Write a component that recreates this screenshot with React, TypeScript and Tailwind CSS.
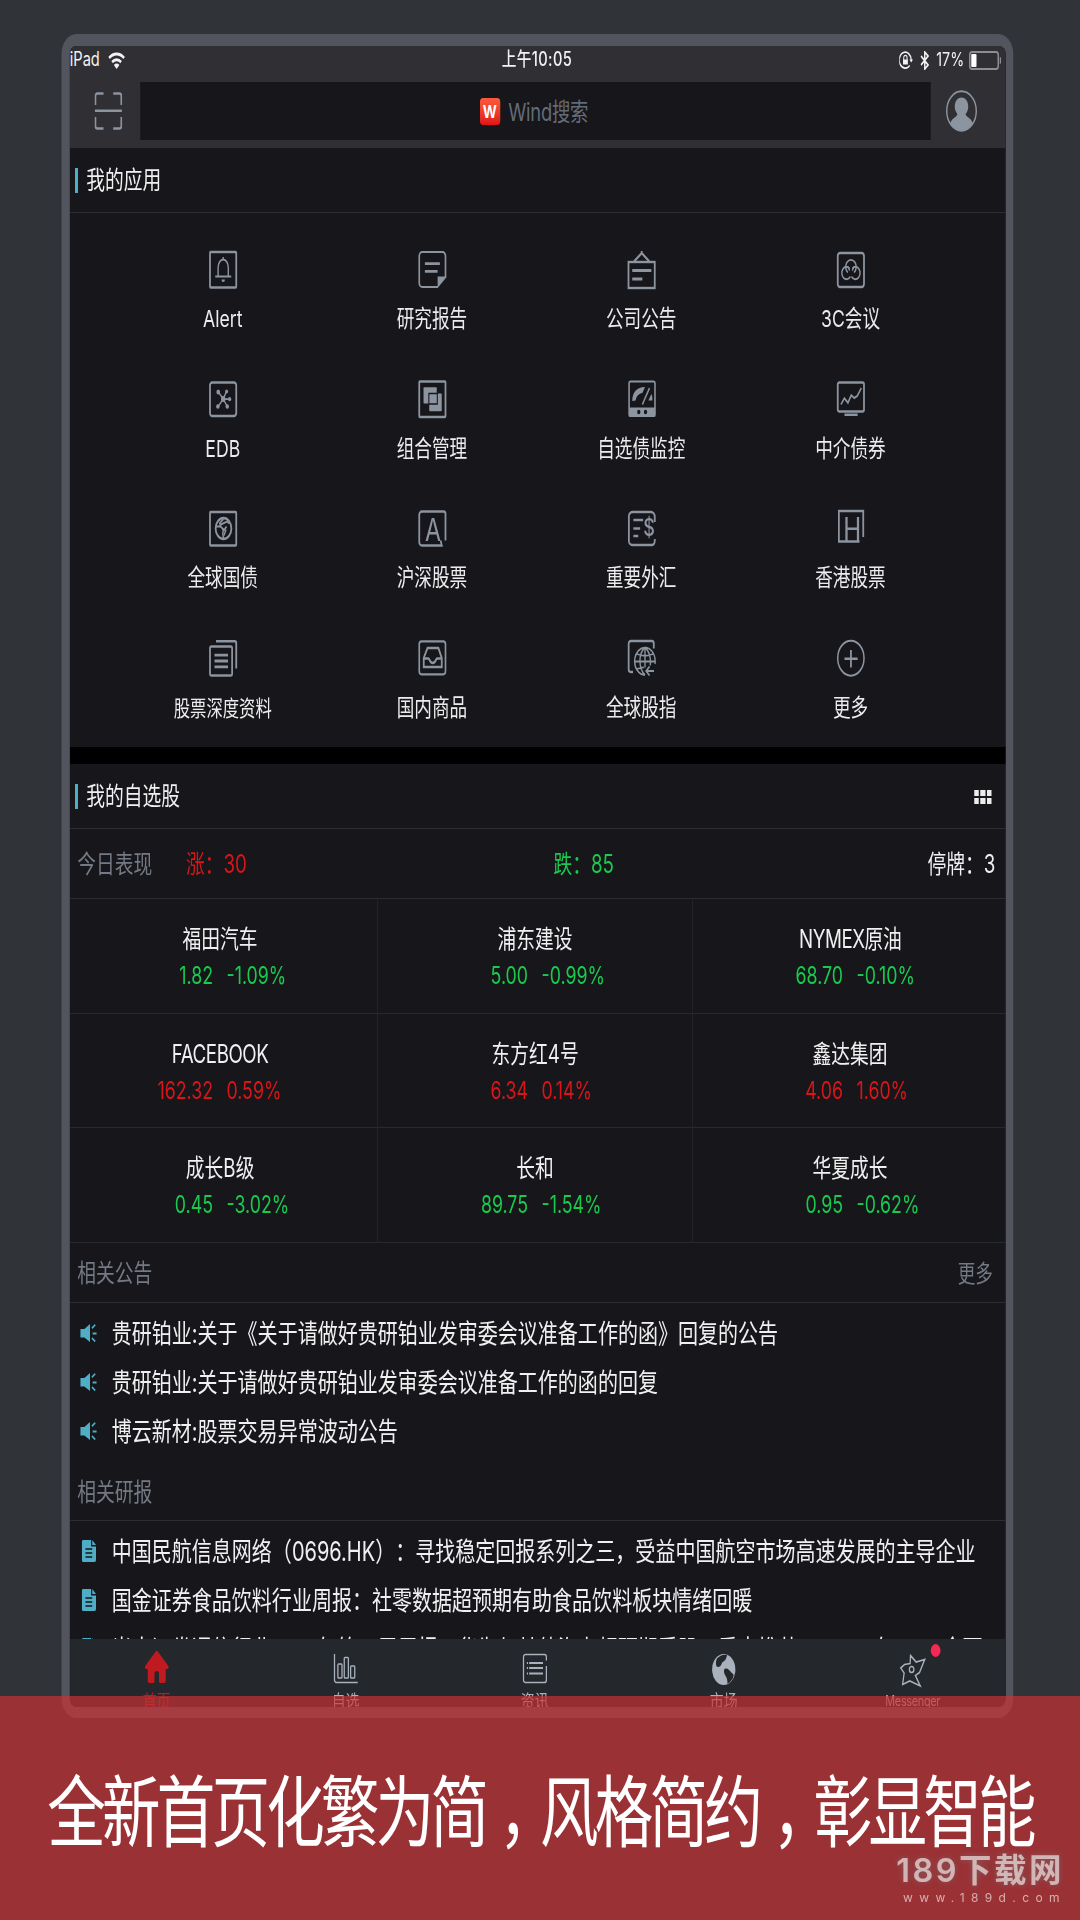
import { clsx } from "clsx";
import type { ReactNode } from "react";

function Icon({ children }: { children: ReactNode }) {
  return (
    <svg
      viewBox="0 0 37 37"
      className="size-[37px] shrink-0 overflow-visible text-[#8c94a0]"
      fill="none"
      stroke="currentColor"
      strokeWidth="2.4"
    >
      {children}
    </svg>
  );
}

const apps: { label: string; small?: boolean; icon: ReactNode }[] = [
  {
    label: "Alert",
    icon: (
      <>
        <rect x="1" y="1" width="35" height="35.5" rx="1" />
        <path d="M8 25.5h21.3M11.8 25.5V17c0-5 3-8.5 6.8-8.5s6.8 3.5 6.8 8.5v8.5M18.6 6v3" strokeWidth="1.9" />
        <path d="M16.3 28.5h4.6a2.3 2.6 0 0 1-4.6 0z" fill="currentColor" stroke="none" />
      </>
    ),
  },
  {
    label: "研究报告",
    icon: (
      <>
        <path d="M36 26V5a4 4 0 0 0-4-4H5a4 4 0 0 0-4 4v27a4 4 0 0 0 4 4h21" strokeWidth="2.2" />
        <path d="M25.5 37V25.5H37v1z" fill="currentColor" stroke="none" />
        <path d="M8.5 12.7h20M8.5 20.3h17" strokeWidth="2.8" />
      </>
    ),
  },
  {
    label: "公司公告",
    icon: (
      <>
        <rect x="1" y="11" width="35" height="26" />
        <path d="M8.4 10.5 18.6 2l10.2 8.5M18.6 0v3" />
        <path d="M6 19.5h25.5M6 28h13.5" strokeWidth="2.8" />
      </>
    ),
  },
  {
    label: "3C会议",
    icon: (
      <>
        <rect x="1" y="2" width="35" height="34" rx="3" />
        <path d="M14.5 21.5a7 7 0 1 1 8.2 0" strokeWidth="1.9" />
        <path d="M16.8 17.4a6.2 6.2 0 1 0 1 8M20.4 17.4a6.2 6.2 0 1 1-1 8" strokeWidth="1.9" />
        <path d="m14.5 16 2.5 3.5M22.7 16l-2.5 3.5" strokeWidth="1.7" />
      </>
    ),
  },
  {
    label: "EDB",
    icon: (
      <>
        <rect x="1" y="1.5" width="35" height="33.5" rx="3" />
        <path d="m12 10.8 6.6 7 4.4-7.3M27 18.1h-8.4l-7.1 7.7M18.6 17.8l5.4 7.7" strokeWidth="1.7" />
        <g fill="currentColor" stroke="none">
          <circle cx="12" cy="11" r="2.5" />
          <circle cx="23.2" cy="10.5" r="2" />
          <circle cx="27.2" cy="18.2" r="2.1" />
          <circle cx="11.5" cy="25.5" r="2.3" />
          <circle cx="24" cy="25.5" r="2.3" />
          <circle cx="18.6" cy="18" r="3" />
        </g>
      </>
    ),
  },
  {
    label: "组合管理",
    icon: (
      <>
        <rect x="1" y="0.5" width="35" height="35.5" rx="1" />
        <g fill="currentColor" stroke="none">
          <rect x="6.7" y="6.2" width="17.6" height="16.3" rx="1" />
          <rect x="14.3" y="12.5" width="16.7" height="17.7" rx="1" />
        </g>
        <path d="M13.8 23.5V12.5h11.3V23H13.8" stroke="#17161a" strokeWidth="1.4" />
      </>
    ),
  },
  {
    label: "自选债监控",
    icon: (
      <>
        <rect x="1.8" y="0.5" width="34.5" height="34.5" rx="1.5" strokeWidth="2.1" />
        <path d="M2 26.5h34.5v9H2z" fill="currentColor" stroke="none" />
        <path d="M6 20C6 11.5 12 6 23 6l-3.5 6c-4.5.5-8 3-9 7.5z" fill="currentColor" stroke="none" />
        <path d="M19.5 23.5 29 7" strokeWidth="1.9" />
        <path d="M31.5 13 27.5 19.5h5.3c.2-3-.2-5-1.300-6.500z" fill="currentColor" stroke="none" />
        <circle cx="14.7" cy="31" r="2.2" fill="#17161a" stroke="none" />
        <circle cx="23.7" cy="31" r="2.2" fill="#17161a" stroke="none" />
      </>
    ),
  },
  {
    label: "中介债券",
    icon: (
      <>
        <rect x="1" y="1.5" width="35" height="29" rx="2" />
        <path d="M10 33.7h17.5" strokeWidth="2.6" />
        <path d="m5.3 23.5 4.5-6.3 4.8 4.6 4.4-7.6 4 2.8 4-2 5.4-8" strokeWidth="2" />
      </>
    ),
  },
  {
    label: "全球国债",
    icon: (
      <>
        <rect x="1" y="2" width="35" height="33.5" rx="1" />
        <circle cx="19" cy="18.5" r="10.5" />
        <path d="M9 16.500h6l4 3-1 4 1 5.500M15 16l-1-3 5-4M15.500 14.500l8-3 3 2M20 20l3-3.500" strokeWidth="2" />
        <path d="m17 19 5 1.500-2.500 5" strokeWidth="1.8" />
      </>
    ),
  },
  {
    label: "沪深股票",
    icon: (
      <>
        <path d="M36 30.500V4a2.500 2.500 0 0 0-2.500-2.500h-29A3.500 3.500 0 0 0 1 5v27a3.500 3.500 0 0 0 3.500 3.500H31l-1.500-5" />
        <text x="19.5" y="31" textAnchor="middle" fontSize="31" fill="currentColor" stroke="none">
          A
        </text>
      </>
    ),
  },
  {
    label: "重要外汇",
    icon: (
      <>
        <path d="M36 12V7a5 5 0 0 0-5-5H6a4.500 4.500 0 0 0-4.500 4.500v24A4.500 4.500 0 0 0 6 35h26a4 4 0 0 0 4-4v-2" />
        <path d="M7.500 10h13M7.500 18.500h9M7.500 26H14" strokeWidth="2.7" />
        <text x="28.5" y="26.5" textAnchor="middle" fontSize="24" fontWeight="500" fill="currentColor" stroke="none">
          $
        </text>
      </>
    ),
  },
  {
    label: "香港股票",
    icon: (
      <>
        <path d="M35 27V1H2.500v30.500H30" />
        <text
          x="8.5"
          y="31.5"
          fontSize="32"
          textLength="24"
          lengthAdjust="spacingAndGlyphs"
          fill="currentColor"
          stroke="none"
        >
          H
        </text>
      </>
    ),
  },
  {
    label: "股票深度资料",
    small: true,
    icon: (
      <>
        <rect x="1" y="6.5" width="29.5" height="29" rx="1.5" />
        <path d="M9 1.300h25a2 2 0 0 1 2 2V28.500" strokeWidth="2.5" />
        <path d="M7 15.200h18M7 21h18M7 26.800h18" strokeWidth="2.8" />
      </>
    ),
  },
  {
    label: "国内商品",
    icon: (
      <>
        <rect x="1" y="1.3" width="35" height="33" rx="3" strokeWidth="2.2" />
        <path d="M12 8h14.500L31 18v9H7v-9zM7 18.500h6.500c1 0 1.500 4.500 5.500 4.500s4.500-4.500 5.500-4.500H31" />
      </>
    ),
  },
  {
    label: "全球股指",
    icon: (
      <>
        <path d="M34.700 8.500V3.500A2.500 2.500 0 0 0 32.200 1H4A2.800 2.800 0 0 0 1.200 3.800v25.500A2.800 2.800 0 0 0 4 32h3" />
        <path d="M36.300 24A13.700 13.700 0 1 0 23 35M23 7.500v20M9.500 21.500H36M12.500 14c6 2.300 15 2.300 21 0M12.500 29c3-1 6-1.700 9-1.700M23 7.500c-9 6-9 21 0 27.500M23 7.500c6 4 8 10 7 18" strokeWidth="1.8" />
        <path d="M35 31H24.500M29 26.500 24.500 31l4.500 4.500" strokeWidth="1.9" />
      </>
    ),
  },
  {
    label: "更多",
    icon: (
      <>
        <circle cx="18.5" cy="18.2" r="17.5" strokeWidth="2" />
        <path d="M10 18.700h17.500M18.600 10v17.500" />
      </>
    ),
  },
];

const stocks = [
  { name: "福田汽车", price: "1.82", change: "-1.09%" },
  { name: "浦东建设", price: "5.00", change: "-0.99%" },
  { name: "NYMEX原油", price: "68.70", change: "-0.10%" },
  { name: "FACEBOOK", price: "162.32", change: "0.59%" },
  { name: "东方红4号", price: "6.34", change: "0.14%" },
  { name: "鑫达集团", price: "4.06", change: "1.60%" },
  { name: "成长B级", price: "0.45", change: "-3.02%" },
  { name: "长和", price: "89.75", change: "-1.54%" },
  { name: "华夏成长", price: "0.95", change: "-0.62%" },
];

const notices = [
  "贵研铂业:关于《关于请做好贵研铂业发审委会议准备工作的函》回复的公告",
  "贵研铂业:关于请做好贵研铂业发审委会议准备工作的函的回复",
  "博云新材:股票交易异常波动公告",
];

const reports = [
  "中国民航信息网络（0696.HK）：寻找稳定回报系列之三，受益中国航空市场高速发展的主导企业",
  "国金证券食品饮料行业周报：社零数据超预期有助食品饮料板块情绪回暖",
  "光大证券通信行业2018年第12周周报：华为与其他海力超预期看股，重点推荐Q1-2018年，5G全面",
];

const tabs: { label: string; icon: ReactNode; active?: boolean; dot?: boolean }[] = [
  {
    label: "首页",
    active: true,
    icon: (
      <path
        d="M14.300.8a2.300 2.300 0 0 1 3.400 0L31 14.500c1.500 1.600.8 3.500-1 3.500h-2v12a2 2 0 0 1-2 2h-5.500a1.500 1.500 0 0 1-1.500-1.500V23a3 3 0 0 0-6 0v7.500a1.500 1.500 0 0 1-1.500 1.500H6a2 2 0 0 1-2-2V18H2C.2 18-.5 16.100 1 14.500z"
        fill="currentColor"
      />
    ),
  },
  {
    label: "自选",
    icon: (
      <g fill="none" stroke="currentColor" strokeWidth="1.7">
        <path d="M1 3v26a2.500 2.500 0 0 0 2.500 2.500H32" />
        <rect x="5.5" y="13" width="5.5" height="14" rx="1" />
        <rect x="14" y="6.5" width="5.5" height="20.5" rx="1" />
        <rect x="22.5" y="15" width="5.5" height="12" rx="1" />
      </g>
    ),
  },
  {
    label: "资讯",
    icon: (
      <g fill="none" stroke="currentColor" strokeWidth="1.7">
        <path d="M31.500 9.500V6A2.500 2.500 0 0 0 29 3.500H3.500A2.500 2.500 0 0 0 1 6v23a2.500 2.500 0 0 0 2.500 2.500H29a2.500 2.500 0 0 0 2.500-2.500V15" />
        <path d="M8.500 12H27M8.500 17H27M8.500 22.500H27M5.500 12h1.500M5.500 17h1.500M5.500 22.500h1.500" strokeWidth="2" />
      </g>
    ),
  },
  {
    label: "市场",
    icon: (
      <>
        <circle cx="16" cy="18.5" r="15.5" fill="currentColor" />
        <path
          d="M7 7.500c4-3.500 9-4.500 13.500-3.500-1 2-1 3.500-2.500 5s-4 1.500-5 4-4 3.500-6.500 2.500C5 13.500 5.500 9.500 7 7.500zM17 18c4-1.500 6 1 8.500 3s4 2 3.500 4c-1 3.500-4 6-8 8 0-3-.5-6-2.500-8s-3-5-1.500-7z"
          fill="#24272b"
        />
      </>
    ),
  },
  {
    label: "Messenger",
    dot: true,
    icon: (
      <g fill="none" stroke="currentColor" strokeWidth="1.7">
        <path d="m13 4.500 7.500 6.500L32 8.500 25 21.500 19.500 24.500 26 35l-14-5-9.500 3.500L4.500 22 0 17l5-3.500 7.500-1z" />
        <circle cx="14.5" cy="18.5" r="3" />
      </g>
    ),
  },
];

function StatusBar() {
  return (
    <div className="flex h-[28px] items-center pr-[6px] text-[19.5px] text-[#f2f2f3]">
      <div className="flex flex-1 items-center gap-[11px]">
        <span>iPad</span>
        <svg viewBox="0 0 23 17" className="h-[17px] w-[23px]" fill="none" stroke="currentColor" strokeWidth="3">
          <path d="M1.500 6a14.500 14.500 0 0 1 20 0M5.500 10.200a8.700 8.700 0 0 1 12 0" />
          <path d="m7.800 13 3.700 4 3.700-4a5.500 5.500 0 0 0-7.400 0z" fill="currentColor" stroke="none" />
        </svg>
      </div>
      <span className="pl-[4px] font-medium tracking-[0.5px]">上午10:05</span>
      <div className="flex flex-1 items-center justify-end">
        <svg viewBox="0 0 18 18" className="h-[18px] w-[18px]" fill="none" stroke="currentColor" strokeWidth="1.7">
          <path d="M14 14.500A8 8 0 1 1 16 9" />
          <path d="m13.500 8.500 2.500 3 2.500-3z" fill="currentColor" stroke="none" />
          <path d="M6 9V6.500a2.200 2.200 0 0 1 4.400 0V9" strokeWidth="1.3" />
          <rect x="5" y="8.5" width="6.5" height="5" fill="currentColor" stroke="none" />
        </svg>
        <svg viewBox="0 0 12 19" className="ml-[10px] h-[19px] w-[12px]" fill="none" stroke="currentColor" strokeWidth="1.9">
          <path d="m1 5 9.500 9-4.500 4V1l4.500 4L1 14" />
        </svg>
        <span className="ml-[9px] text-[19px]">17%</span>
        <div className="ml-[6px] flex h-[19px] w-[40px] rounded-[4px] border-2 border-[#8e8d91] p-px">
          <div className="w-[7px] rounded-[1px] bg-white" />
        </div>
        <div className="ml-px h-[7px] w-[2.5px] rounded-r-full bg-[#8e8d91]" />
      </div>
    </div>
  );
}

function SearchBar() {
  return (
    <div className="flex items-center pt-[8px] pb-[8px]">
      <div className="flex w-[94px] justify-center pl-[9px] text-[#8c94a0]">
        <svg viewBox="0 0 37 38" className="h-[38px] w-[37px]" fill="none" stroke="currentColor" strokeWidth="2.4">
          <path d="M1.200 13V4a2.500 2.500 0 0 1 2.500-2.500H12M25 1.500h8.300A2.500 2.500 0 0 1 35.800 4v9M1.200 25v9a2.500 2.500 0 0 0 2.500 2.500H12M25 36.500h8.300a2.500 2.500 0 0 0 2.500-2.500v-9M.5 18.700h36" />
        </svg>
      </div>
      <div className="flex h-[58px] w-[1054px] items-center justify-center bg-[#17161a] pr-[4px]">
        <div className="flex size-[27px] items-center justify-center rounded-[4px] bg-linear-to-b from-[#fd5a3c] to-[#e01017] text-[18px] font-bold text-white">
          W
        </div>
        <span className="ml-[11px] pt-[2px] text-[24.5px] tracking-[-0.3px] text-[#636c77]">Wind搜索</span>
      </div>
      <svg viewBox="0 0 42 42" className="ml-[20px] size-[42px] text-[#8c94a0]">
        <circle cx="21" cy="21" r="19.7" fill="none" stroke="currentColor" strokeWidth="1.9" />
        <path
          d="M21 7.500c5.500 0 9 4 9 9 0 3-1.500 6-3.500 7.500 0 1.500 2 2.500 4.500 4 3 1.800 4.500 3.500 5 5.500A20 20 0 0 1 21 41 20 20 0 0 1 6 33.500c.5-2 2-3.700 5-5.500 2.500-1.500 4.500-2.500 4.500-4-2-1.500-3.500-4.500-3.500-7.500 0-5 3.500-9 9-9z"
          fill="currentColor"
        />
      </svg>
    </div>
  );
}

function SectionTitle({ title, children }: { title: string; children?: ReactNode }) {
  return (
    <div className="flex h-[65px] items-center border-b border-[#2b2d31] pr-[19px] pl-[7px] text-[25px] text-[#f0f0f1]">
      <span className="mr-[11px] h-[25px] w-[4px] bg-[#4db0c8]" />
      <span className="pt-[2px]">{title}</span>
      {children}
    </div>
  );
}

function AppGrid() {
  return (
    <div className="grid h-[534px] auto-rows-[129.5px] grid-cols-[repeat(4,279px)] pt-[38px] pl-[64.5px]">
      {apps.map((app) => (
        <div key={app.label} className="flex flex-col items-center">
          <Icon>{app.icon}</Icon>
          <span
            className={clsx(
              "mt-[13px] leading-[36px] text-[#ececed]",
              app.small ? "text-[21.8px]" : "text-[23.5px]"
            )}
          >
            {app.label}
          </span>
        </div>
      ))}
    </div>
  );
}

function Performance() {
  return (
    <div className="grid h-[70px] grid-cols-[145px_490px_1fr_auto] items-center border-b border-[#2b2d31] pt-[3px] pr-[14px] pl-[10px] text-[25px]">
      <span className="text-[#737a85]">今日表现</span>
      <span className="text-[#d81619]">涨：30</span>
      <span className="text-[#18cb4f]">跌：85</span>
      <span className="text-[#f0f0f1]">停牌：3</span>
    </div>
  );
}

function StockGrid() {
  return (
    <div className="-ml-[9px] grid w-[1260px] auto-rows-[114.7px] grid-cols-3">
      {stocks.map((stock) => (
        <div
          key={stock.name}
          className="flex flex-col items-center border-r border-b border-[#26292d] pt-[22px]"
        >
          <span
            className={clsx(
              "text-[25px] leading-[36px] text-[#f0f0f1]",
              /[A-Z]{2}/.test(stock.name) && "tracking-[-0.6px]"
            )}
          >
            {stock.name}
          </span>
          <div
            className={clsx(
              "grid w-full grid-cols-2 gap-[18px] pt-[1px] pr-[1px] text-[23.7px] leading-[36px]",
              stock.change.startsWith("-") ? "text-[#18cb4f]" : "text-[#d81619]"
            )}
          >
            <span className="text-right">{stock.price}</span>
            <span>{stock.change}</span>
          </div>
        </div>
      ))}
    </div>
  );
}

function SpeakerIcon() {
  return (
    <svg viewBox="0 0 22 18" className="h-[18px] w-[22px] text-[#4fadc6]" fill="currentColor">
      <path d="M0 5h5.500L13 0v18l-7.500-4.500H0z" />
      <path d="m15.500 4.300 4.500-3.500M16.500 9.500H22M15.500 14l4.500 3.500" stroke="currentColor" strokeWidth="1.9" />
    </svg>
  );
}

function DocIcon() {
  return (
    <svg viewBox="0 0 19 22" className="ml-[2px] h-[22px] w-[19px] text-[#4fadc6]" fill="currentColor">
      <path d="M2 0h10.500v6.500H19V20a2 2 0 0 1-2 2H2a2 2 0 0 1-2-2V2a2 2 0 0 1 2-2z" />
      <path d="M14 0v5h5z" />
      <path d="M5 9h9M5 13h9M5 17h9" stroke="#17161a" strokeWidth="1.4" />
    </svg>
  );
}

function NewsList({ items, icon }: { items: string[]; icon: ReactNode }) {
  return (
    <div className="pt-[5px] pb-[1px]">
      {items.map((item) => (
        <div key={item} className="flex h-[49px] items-center pl-[14px] whitespace-nowrap">
          <div className="w-[42px]">{icon}</div>
          <span className="pt-[1px] text-[26.7px] text-[#f0f0f1] [text-spacing-trim:space-all]">{item}</span>
        </div>
      ))}
    </div>
  );
}

function TabBar() {
  return (
    <div className="bg-[#24272b]">
      <div className="-ml-[10px] grid w-[1260px] grid-cols-5">
        {tabs.map((tab) => (
          <div
            key={tab.label}
            className={clsx(
              "relative flex flex-col items-center pt-[12px]",
              tab.active ? "text-[#be1a1f]" : "text-[#a9b1bd]"
            )}
          >
            <svg viewBox="0 0 32 33" className="h-[33px] w-[32px] overflow-visible">
              {tab.icon}
            </svg>
            <span
              className={clsx(
                "mt-[5px] leading-[24px]",
                tab.dot ? "text-[14.5px] tracking-[-0.4px]" : "text-[18.5px]"
              )}
            >
              {tab.label}
            </span>
            {tab.dot && (
              <span className="absolute top-[5px] left-[150px] size-[13px] rounded-full bg-[#f42a54]" />
            )}
          </div>
        ))}
      </div>
    </div>
  );
}

function Tablet() {
  return (
    <div className="ml-[82px] h-[1684px] w-[1269px] overflow-hidden rounded-[20px] border-t-12 border-r-10 border-b-11 border-l-11 border-[#52555e]">
      <div className="flex h-full flex-col overflow-hidden bg-[#17161a]">
        <div className="h-[102px] shrink-0 bg-[#302f33]">
          <StatusBar />
          <SearchBar />
        </div>
        <div className="h-[1491px] shrink-0 overflow-hidden">
          <SectionTitle title="我的应用" />
          <AppGrid />
          <div className="h-[17px] bg-black" />
          <SectionTitle title="我的自选股">
            <div className="mt-[2px] ml-auto grid grid-cols-3 gap-[2px]">
              {[0, 1, 2, 3, 4, 5].map((i) => (
                <span key={i} className="h-[6px] w-[6.5px] bg-[#ececed]" />
              ))}
            </div>
          </SectionTitle>
          <Performance />
          <StockGrid />
          <div className="flex h-[60px] items-center justify-between border-b border-[#2b2d31] pt-[2px] pr-[17px] pl-[10px] text-[25px] text-[#737a85]">
            <span>相关公告</span>
            <span className="text-[23.5px]">更多</span>
          </div>
          <NewsList items={notices} icon={<SpeakerIcon />} />
          <div className="mt-[7px] flex h-[58px] items-center border-b border-[#2b2d31] pt-[2px] pl-[10px] text-[25px] text-[#737a85]">
            相关研报
          </div>
          <NewsList items={reports} icon={<DocIcon />} />
        </div>
        <TabBar />
      </div>
    </div>
  );
}

function Comma() {
  return <span className="inline-block w-[73px] pl-[18px] tracking-[-30px]">，</span>;
}

export default function App() {
  return (
    <div className="relative h-[1920px] w-[1080px] overflow-hidden bg-[#303338] font-['Inter','Noto_Sans_CJK_SC',sans-serif]">
      {/* the artwork is laid out at 3:4 and squeezed to the 9:16 page */}
      <div className="h-[1920px] w-[1440px] origin-top-left scale-x-75 pt-[34px]">
        <Tablet />
        <div className="absolute top-[1696px] left-0 flex h-[224px] w-[1440px] justify-center bg-[#cf3134]/67 pt-[62px] text-[78px] leading-[110px] tracking-[-5px] whitespace-nowrap text-white">
          <span>
            全新首页化繁为简
            <Comma />
            风格简约
            <Comma />
            彰显智能
          </span>
        </div>
      </div>
      <div className="absolute right-[16px] bottom-[13px] text-right whitespace-nowrap text-white/60">
        <div className="text-[32.5px] leading-[36px] font-semibold tracking-[2.5px] [text-shadow:0_0_6px_rgba(120,120,120,0.6)]">
          189下载网
        </div>
        <div className="-mr-[2px] text-[12px] leading-[18px] tracking-[6.4px]">www.189d.com</div>
      </div>
    </div>
  );
}
